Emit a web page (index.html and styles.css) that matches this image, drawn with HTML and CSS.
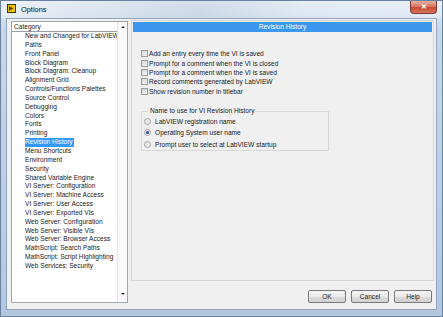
FILE: index.html
```html
<!DOCTYPE html>
<html lang="en">
<head>
    <meta charset="UTF-8">
    <title>Options</title>
    <link rel="stylesheet" href="styles.css">
</head>
<body>
    <div class="window">
        <div class="titlebar">
            <svg class="app-icon" width="9" height="9" viewBox="0 0 9 9">
                <rect x="0" y="0" width="9" height="9" fill="#3a3a1a"/>
                <rect x="1" y="1" width="7" height="7" fill="#f2c200"/>
                <path d="M2 2 L6.5 4.5 L2 7 Z" fill="#5a4a00"/>
            </svg>
            <span class="title">Options</span>
            <div class="close">&#x2715;</div>
        </div>

        <div class="client">
            <div class="category-list">
                <div class="list-header">Category</div>
                <div class="list-body">
                    <ul class="items">
                        <li>New and Changed for LabVIEW 8</li>
                        <li>Paths</li>
                        <li>Front Panel</li>
                        <li>Block Diagram</li>
                        <li>Block Diagram: Cleanup</li>
                        <li>Alignment Grid</li>
                        <li>Controls/Functions Palettes</li>
                        <li>Source Control</li>
                        <li>Debugging</li>
                        <li>Colors</li>
                        <li>Fonts</li>
                        <li>Printing</li>
                        <li><span class="selected">Revision History</span></li>
                        <li>Menu Shortcuts</li>
                        <li>Environment</li>
                        <li>Security</li>
                        <li>Shared Variable Engine</li>
                        <li>VI Server: Configuration</li>
                        <li>VI Server: Machine Access</li>
                        <li>VI Server: User Access</li>
                        <li>VI Server: Exported VIs</li>
                        <li>Web Server: Configuration</li>
                        <li>Web Server: Visible VIs</li>
                        <li>Web Server: Browser Access</li>
                        <li>MathScript: Search Paths</li>
                        <li>MathScript: Script Highlighting</li>
                        <li>Web Services: Security</li>
                    </ul>
                </div>
                <div class="scrollbar">
                    <span class="arrow-up"></span>
                    <span class="arrow-down"></span>
                </div>
            </div>

            <div class="right-column">
                <div class="page">
                    <div class="page-header">Revision History</div>

                    <div class="checks">
                        <label class="check"><span class="box"></span>Add an entry every time the VI is saved</label>
                        <label class="check"><span class="box"></span>Prompt for a comment when the VI is closed</label>
                        <label class="check"><span class="box"></span>Prompt for a comment when the VI is saved</label>
                        <label class="check"><span class="box"></span>Record comments generated by LabVIEW</label>
                        <label class="check"><span class="box"></span>Show revision number in titlebar</label>
                    </div>

                    <div class="group">
                        <div class="legend">Name to use for VI Revision History</div>
                        <label class="radio"><span class="dot"></span>LabVIEW registration name</label>
                        <label class="radio"><span class="dot checked"></span>Operating System user name</label>
                        <label class="radio"><span class="dot"></span>Prompt user to select at LabVIEW startup</label>
                    </div>
                </div>

                <div class="buttons">
                    <button>OK</button>
                    <button>Cancel</button>
                    <button>Help</button>
                </div>
            </div>
        </div>
    </div>
</body>
</html>
```

FILE: styles.css
```css
html, body {
    margin: 0;
    padding: 0;
}
body {
    width: 443px;
    height: 317px;
    overflow: hidden;
    font-family: "Liberation Sans", Arial, sans-serif;
    font-size: 6.6px;
    color: #1a1a1a;
}
.window {
    box-sizing: border-box;
    width: 443px;
    height: 317px;
    display: flex;
    flex-direction: column;
    padding: 0 5px 6px 5px;
    border: 1px solid #6a82a2;
    background: linear-gradient(180deg, #dde7f2 0%, #c6d7ea 10%, #b3c8df 100%);
}
.titlebar {
    height: 20px;
    display: flex;
    align-items: center;
    position: relative;
    background: linear-gradient(90deg, rgba(255,255,255,0.45), rgba(150,160,175,0.12) 45%, rgba(255,255,255,0.25) 70%, rgba(255,255,255,0.35));
    margin: 0 -5px;
    padding: 0 5px;
}
.app-icon {
    margin-left: 1px;
    margin-top: -2px;
}
.title {
    margin-left: 5px;
    font-size: 7.4px;
    color: #111;
    margin-top: -1px;
}
.close {
    position: absolute;
    right: 5px;
    top: 0;
    width: 27px;
    height: 13px;
    box-sizing: border-box;
    border: 1px solid #7b3b3b;
    border-top: none;
    border-radius: 0 0 4px 4px;
    background: linear-gradient(180deg, #eab0a0 0%, #d77a66 45%, #c64b35 55%, #d97458 100%);
    color: #fff;
    font-size: 7px;
    font-weight: bold;
    text-align: center;
    line-height: 12px;
}
.client {
    flex: 1;
    display: flex;
    gap: 3px;
    padding: 1px 2px 6px 4px;
    background: #f0f0f0;
    border: 1px solid #8fa4bc;
}
.category-list {
    width: 117px;
    margin-top: 1px;
    box-sizing: border-box;
    border: 1px solid #a0a6b0;
    background: #fff;
    position: relative;
    display: flex;
    flex-direction: column;
}
.list-header {
    height: 9px;
    line-height: 9px;
    padding-left: 2px;
    margin-right: 10px;
    border-bottom: 1px solid #9aa0a8;
}
.list-body {
    flex: 1;
    margin-right: 10px;
}
.items {
    list-style: none;
    margin: 0;
    padding: 0 0 0 13px;
}
.items li {
    height: 8.85px;
    line-height: 8.85px;
    white-space: nowrap;
    overflow: hidden;
}
.selected {
    background: #3399ff;
    color: #fff;
    padding: 0 1px;
    margin-left: -1px;
    display: inline-block;
    line-height: 8.85px;
}
.scrollbar {
    position: absolute;
    top: 0;
    right: 0;
    bottom: 0;
    width: 9px;
    border-left: 1px solid #e4e4e4;
    background: #fafafa;
}
.arrow-up, .arrow-down {
    position: absolute;
    left: 3px;
    width: 0;
    height: 0;
    border-left: 2px solid transparent;
    border-right: 2px solid transparent;
}
.arrow-up {
    top: 4px;
    border-bottom: 2px solid #333;
}
.arrow-down {
    bottom: 7px;
    border-top: 2px solid #333;
}
.right-column {
    flex: 1;
    display: flex;
    flex-direction: column;
}
.page {
    height: 261px;
    box-sizing: border-box;
    border: 1px solid #d5d5d5;
    padding: 1px;
}
.page-header {
    height: 10px;
    line-height: 10px;
    background: #3c97ef;
    color: #fff;
    text-align: center;
}
.checks {
    margin-top: 17px;
    padding-left: 8px;
    display: flex;
    flex-direction: column;
}
.check {
    height: 9.4px;
    display: flex;
    align-items: center;
}
.box {
    width: 5px;
    height: 5px;
    border: 1px solid #9a9a9a;
    background: linear-gradient(135deg, #d8d8d8, #f4f4f4);
    margin-right: 1px;
}
.group {
    position: relative;
    margin: 15px 0 0 8px;
    width: 188px;
    height: 40px;
    box-sizing: border-box;
    border: 1px solid #d8d8d8;
    padding: 4px 0 0 2px;
}
.legend {
    position: absolute;
    top: -5px;
    left: 6px;
    background: #f0f0f0;
    padding: 0 2px;
    line-height: 8px;
}
.radio {
    height: 11.3px;
    display: flex;
    align-items: center;
}
.dot {
    width: 5px;
    height: 5px;
    border: 1px solid #a4a4a4;
    border-radius: 50%;
    background: #eaeaea;
    margin-right: 4px;
    position: relative;
}
.dot.checked::after {
    content: "";
    position: absolute;
    left: 1px;
    top: 1px;
    width: 3px;
    height: 3px;
    border-radius: 50%;
    background: #2a4f8e;
}
.buttons {
    display: flex;
    justify-content: flex-end;
    gap: 5px;
    margin-top: 9px;
    padding-right: 2px;
}
button {
    width: 38px;
    height: 13px;
    padding: 0;
    font-family: inherit;
    font-size: 6.6px;
    color: #222;
    border: 1px solid #7a7a7a;
    border-radius: 2px;
    background: linear-gradient(180deg, #f4f4f4 0%, #eaeaea 50%, #dcdcdc 51%, #d2d2d2 100%);
}
```
